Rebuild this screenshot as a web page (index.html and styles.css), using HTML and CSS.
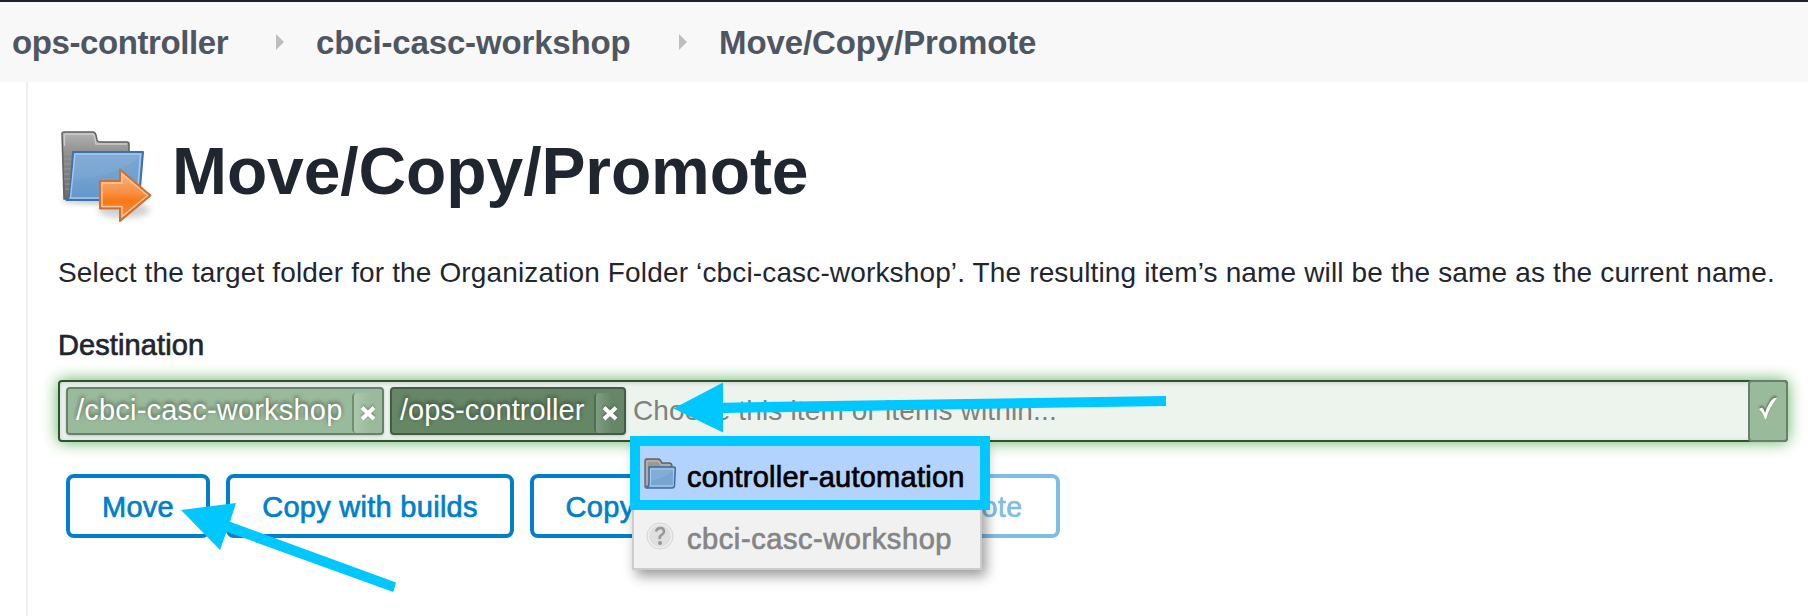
FILE: index.html
```html
<!DOCTYPE html>
<html lang="en">
<head>
<meta charset="utf-8">
<title>Move/Copy/Promote</title>
<link rel="stylesheet" href="styles.css">
</head>
<body>
<nav class="breadcrumbs">
  <span class="crumb crumb-first">ops-controller</span>
  <i class="sep"></i>
  <span class="crumb crumb-mid">cbci-casc-workshop</span>
  <i class="sep"></i>
  <span class="crumb crumb-last">Move/Copy/Promote</span>
</nav>
<main class="panel">
  <header class="heading">
    <svg class="heading-icon" width="96" height="96" viewBox="0 0 96 96">
      <defs>
        <linearGradient id="gray" x1="0" y1="0" x2="0" y2="1"><stop offset="0" stop-color="#b4b4b4"/><stop offset=".35" stop-color="#8b8b8b"/><stop offset="1" stop-color="#6c6c6c"/></linearGradient>
        <linearGradient id="blue" x1="0" y1="0" x2="0" y2="1"><stop offset="0" stop-color="#83acd4"/><stop offset=".5" stop-color="#78a6d3"/><stop offset="1" stop-color="#6598cb"/></linearGradient>
        <linearGradient id="orange" x1="0" y1="0" x2="0" y2="1"><stop offset="0" stop-color="#fcb98a"/><stop offset=".45" stop-color="#f98f42"/><stop offset=".6" stop-color="#f57919"/><stop offset="1" stop-color="#f98c3c"/></linearGradient>
        <filter id="soft" x="-30%" y="-60%" width="160%" height="220%"><feGaussianBlur stdDeviation="3"/></filter>
      </defs>
      <ellipse cx="36" cy="80" rx="33" ry="3" fill="#000" opacity=".3" filter="url(#soft)"/>
      <ellipse cx="66" cy="90" rx="26" ry="8" fill="#000" opacity=".18" filter="url(#soft)"/>
      <path d="M6 79 L4 14 Q4 12 6 12 H35 Q37 12 38 15 L39 20 Q40 22 42 22 H69 Q71 22 71 24 V79 Z" fill="url(#gray)" stroke="#606060" stroke-width="1.5"/>
      <path d="M6.500 26 V15 Q6.500 14 8 14 H34 Q36 14 36.500 17 L38 24 H69" fill="none" stroke="#ccc" stroke-width="1.300"/>
      <path d="M6 29H14M6 34H14M6 39H14M6 44H13M6 49H13M6 54H12M6 59H12M7 64H12M7 69H11" stroke="#999" stroke-width="1"/>
      <path d="M15 32 H85 L81 80 H8.500 Q12 76 12.500 70 Z" fill="url(#blue)" stroke="#3c71ac" stroke-width="2" stroke-linejoin="round"/>
      <path d="M17 34 H82.500 L79 78 H12.500 Z" fill="none" stroke="#a6c6e6" stroke-width="1.500"/>
      <path d="M15 60 Q56 57 81 38 L79 77 H13 Z" fill="#5f95cb" opacity=".25"/>
      <path d="M42 61 H62 V49.500 L92.500 75.500 L62 101 V88.500 H42 Z" fill="url(#orange)" stroke="#cd7034" stroke-width="2" stroke-linejoin="round"/>
      <path d="M44 63 H64 V54 L89.500 75.500 L64 96.500 V86.500 H44 Z" fill="none" stroke="#ffc89f" stroke-width="1.300"/>
    </svg>
    <h1 class="title">Move/Copy/Promote</h1>
  </header>
  <p class="intro">Select the target folder for the Organization Folder ‘cbci-casc-workshop’. The resulting item’s name will be the same as the current name.</p>
  <div class="label"><span>Destination</span></div>
  <div class="picker">
    <div class="chip chip-light"><span class="chip-text">/cbci-casc-workshop</span><span class="chip-close"><svg width="16" height="16" viewBox="0 0 16 16"><path d="M2 2.500L14 14M14 2.500L2 14"/></svg></span></div>
    <div class="chip chip-dark"><span class="chip-text ops">/ops-controller</span><span class="chip-close"><svg width="16" height="16" viewBox="0 0 16 16"><path d="M2 2.500L14 14M14 2.500L2 14"/></svg></span></div>
    <span class="placeholder">Choose this item or items within...</span>
    <div class="confirm"><svg width="20" height="24" viewBox="0 0 20 24"><path d="M1 12 L4 10.500 Q6 12 7 16 Q11 4 16 1 L19 1 Q12 9 8 22 L7 22 Q4 14 1 12Z" fill="#fff"/></svg></div>
    <div class="menu">
      <div class="option active">
        <svg width="32" height="32" viewBox="0 0 32 32"><path d="M1 29V2.500Q1 1 2.500 1H14Q16 1 17 3L18 5H25Q28 5 28 8V29Z" fill="#999" stroke="#65625f" stroke-width="1.300"/><path d="M3 27V3H14L17 7H26" fill="none" stroke="#c4c1bc"/><path d="M5 9H30Q31.500 9 31.300 11L30.500 28Q30 30 28 30H3Q5 28 5 25Z" fill="#82add8" stroke="#3d6ea5" stroke-width="1.500"/><path d="M6.500 11H29.500L29 28H6.500Z" fill="none" stroke="#aacbed"/><path d="M7 23Q20 20 29 13V27H7Z" fill="#6396cb" opacity=".35"/></svg>
        <span class="option-text">controller-automation</span>
      </div>
      <div class="option disabled">
        <svg width="32" height="32" viewBox="0 0 32 32"><circle cx="16" cy="16" r="13" fill="#dfdfdf" stroke="#d6d6d6"/><circle cx="16" cy="16" r="11.500" fill="none" stroke="#eee" stroke-width="1.500"/><path d="M12 11.500Q13 8 16.500 8T20 11.500Q20 13.500 17.500 15T16 19" fill="none" stroke="#979797" stroke-width="2.500"/><circle cx="16" cy="23" r="2" fill="#979797"/></svg>
        <span class="option-text second">cbci-casc-workshop</span>
      </div>
    </div>
  </div>
  <div class="buttons">
    <button class="btn w-move"><span>Move</span></button>
    <button class="btn w-builds"><span>Copy with builds</span></button>
    <button class="btn w-copy"><span>Copy without builds</span></button>
    <button class="btn w-promote" disabled><span>Promote</span></button>
  </div>
</main>
<svg class="annotations" width="1808" height="616" viewBox="0 0 1808 616">
  <rect x="635" y="441" width="350" height="64" fill="none" stroke="#00c8ff" stroke-width="10"/>
  <path d="M673.500 408.500L723 382.500V402.700L1166 396V406L723 413V432.500Z"/>
  <path d="M181 510L236 503L230 521.700L396 582.500L393.300 592L226.500 531.700L220 550Z"/>
</svg>
</body>
</html>
```
FILE: styles.css
```css
* { box-sizing: border-box; }
body {
  margin: 0;
  height: 616px;
  overflow: hidden;
  background: #fff;
  color: #1f262f;
  font: 28px/32px "Liberation Sans", Arial, sans-serif;
}
.breadcrumbs {
  display: flex;
  align-items: center;
  height: 82px;
  padding: 1px 0 0 12px;
  border-top: 2px solid #1e222e;
  background: #f8f8f8;
  color: #4e5662;
  font-size: 33px;
  font-weight: 700;
  line-height: 40px;
  white-space: nowrap;
}
.crumb-first { width: 264px; letter-spacing: -.4px; }
.crumb-mid { width: 363px; letter-spacing: -.15px; }
.crumb-last { letter-spacing: -.1px; }
.sep {
  flex: none;
  width: 8px;
  height: 16px;
  margin: 0 32px 1px 0;
  background: #bebebe;
  clip-path: polygon(0 0, 100% 50%, 0 100%);
}
.panel {
  height: 534px;
  margin-left: 26px;
  padding: 38px 20px 0 30px;
  border-left: 2px solid #e9eff3;
}
.heading { display: flex; height: 110px; }
.heading-icon { overflow: visible; }
.title {
  margin: 13px 0 0 18px;
  font-size: 66px;
  font-weight: 700;
  line-height: 76px;
  letter-spacing: -.1px;
  white-space: nowrap;
}
.intro { margin: 27px 0 0; white-space: nowrap; letter-spacing: .145px; }
.label {
  margin-top: 40px;
  font-size: 29px;
  letter-spacing: .1px;
  -webkit-text-stroke: .7px currentColor;
}
.picker {
  position: relative;
  z-index: 1;
  display: flex;
  align-items: center;
  gap: 6px;
  width: 1730px;
  height: 62px;
  margin-top: 19px;
  padding-left: 6px;
  border: 2px solid #2c552d;
  border-radius: 4px;
  background: #edf4ee;
  box-shadow: 0 0 16px #62b162, inset 0 1px 5px rgba(0,0,0,.15);
  white-space: nowrap;
}
.chip {
  display: flex;
  width: 318px;
  height: 48px;
  border: 2px solid #69806a;
  border-radius: 4px;
  background: #9abb9b;
  color: #fff;
  font-size: 29px;
  line-height: 42px;
  letter-spacing: .2px;
  text-shadow: 0 -2px 4px rgba(0,0,0,.55);
  box-shadow: 0 1px 3px rgba(0,0,0,.2);
}
.chip-dark {
  width: 236px;
  border-color: #455b46;
  background: #658766;
  letter-spacing: .05px;
}
.chip-text { flex: 1; padding-left: 8px; }
.chip-close {
  display: flex;
  align-items: center;
  justify-content: center;
  width: 30px;
  height: 40px;
  margin-top: 4px;
  border-left: 2px solid rgba(50,75,50,.4);
  border-radius: 4px 0 0 4px;
  background: linear-gradient(90deg, rgba(255,255,255,.18), transparent 60%);
}
.chip-close svg { filter: drop-shadow(0 -1px 1px rgba(0,0,0,.3)); }
.chip-close path { stroke: #fff; stroke-width: 4; }
.placeholder {
  padding: 0 0 1px 1px;
  color: #7d827e;
  letter-spacing: .15px;
}
.confirm {
  display: flex;
  align-items: center;
  justify-content: center;
  width: 40px;
  height: 62px;
  margin: 0 -2px 0 auto;
  border: 2px solid #69806a;
  border-radius: 4px;
  background: #9abb9b;
}
.confirm svg { margin-bottom: 4px; filter: drop-shadow(0 -2px 1px rgba(0,0,0,.45)); }
.menu {
  position: absolute;
  left: 572px;
  top: 58px;
  width: 350px;
  height: 130px;
  border: 2px solid #ccc;
  background: #f1f1f1;
  box-shadow: 4px 6px 12px rgba(0,0,0,.4);
}
.option {
  display: flex;
  align-items: center;
  gap: 11px;
  padding-left: 10px;
  font-size: 29px;
}
.option.active {
  height: 66px;
  padding-top: 4px;
  background: #b1d3fd;
  color: #000;
  letter-spacing: .25px;
}
.option.active svg { margin-bottom: 6px; }
.option.disabled {
  height: 60px;
  padding-top: 1px;
  color: #858585;
  letter-spacing: .58px;
}
.option.disabled svg { margin-bottom: 5px; }
.option-text { -webkit-text-stroke: .7px currentColor; }
.buttons { display: flex; gap: 16px; margin: 32px 0 0 8px; }
.btn {
  height: 64px;
  padding: 2px 0 0;
  border: 4px solid #007fcc;
  border-radius: 8px;
  background: #fff;
  color: #007fcc;
  font: 29px/32px "Liberation Sans", Arial, sans-serif;
  letter-spacing: .28px;
  white-space: nowrap;
  -webkit-text-stroke: .7px currentColor;
}
.btn:disabled { opacity: .5; }
.w-move { width: 144px; }
.w-builds { width: 288px; }
.w-copy { width: 328px; }
.w-promote { width: 186px; }
.annotations { position: absolute; inset: 0; z-index: 2; pointer-events: none; }
.annotations path { fill: #00c8ff; }
```
